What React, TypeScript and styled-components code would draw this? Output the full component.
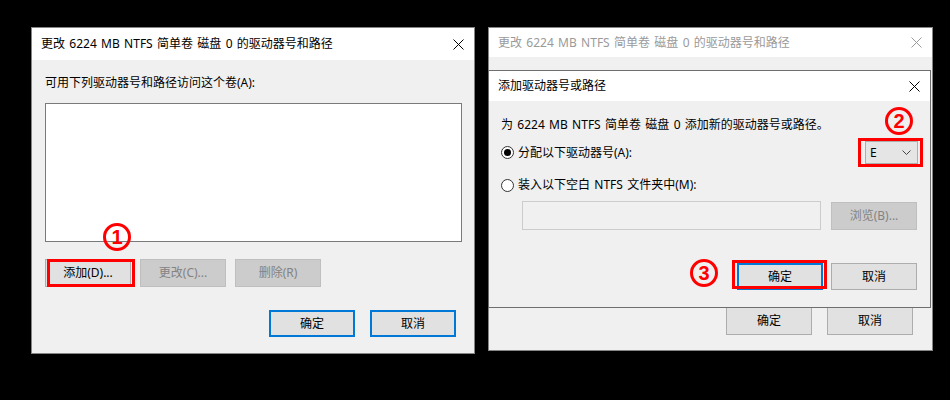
import React from "react";
import styled, { createGlobalStyle } from "styled-components";

const GlobalStyle = createGlobalStyle`
  html, body { margin: 0; padding: 0; background: #000; }
  body {
    font-family: "Noto Sans", "Noto Sans CJK SC", sans-serif;
    font-size: 12px;
    color: #000;
    -webkit-font-smoothing: antialiased;
  }
  * { box-sizing: border-box; }
`;

const Page = styled.div`
  position: relative;
  width: 950px;
  height: 400px;
  background: #000;
  display: flex;
  align-items: flex-start;
  gap: 13px;
  padding: 27px 0 0 31px;
  overflow: hidden;
  word-spacing: 1.2px;
`;

const Window = styled.div<{ $w: number; $h: number }>`
  position: relative;
  display: flex;
  flex-direction: column;
  width: ${(p) => p.$w}px;
  height: ${(p) => p.$h}px;
  border: 1px solid #858585;
  background: #f0f0f0;
`;

const Modal = styled.div`
  position: absolute;
  left: -1px;
  top: 42px;
  width: 443px;
  height: 238px;
  display: flex;
  flex-direction: column;
  border: 1px solid #6e6e6e;
  background: #f0f0f0;
`;

const TitleBar = styled.div<{ $h: number }>`
  height: ${(p) => p.$h}px;
  flex: none;
  background: #fff;
  display: flex;
  align-items: center;
  justify-content: space-between;
  padding: 0 10px 0 9px;
`;

const TitleText = styled.span<{ $inactive?: boolean }>`
  font-size: 12px;
  line-height: 16px;
  color: ${(p) => (p.$inactive ? "#9a9a9a" : "#000")};
  white-space: nowrap;
`;

const CloseIcon = ({ color }: { color: string }) => (
  <svg width="11" height="11" viewBox="0 0 11 11">
    <path d="M0.5 0.5 L10.5 10.5 M10.5 0.5 L0.5 10.5" stroke={color} strokeWidth="1" fill="none" />
  </svg>
);

const Body = styled.div<{ $pad: string }>`
  flex: 1;
  display: flex;
  flex-direction: column;
  padding: ${(p) => p.$pad};
  position: relative;
`;

const Label = styled.div`
  line-height: 16px;
  height: 16px;
  white-space: nowrap;
`;

const ListBox = styled.div`
  margin-top: 12px;
  height: 139px;
  border: 1px solid #7a7a7a;
  background: #fff;
`;

const Row = styled.div<{ $mt?: number; $gap?: number; $justify?: string; $mr?: number }>`
  display: flex;
  align-items: center;
  margin-top: ${(p) => p.$mt ?? 0}px;
  margin-right: ${(p) => p.$mr ?? 0}px;
  gap: ${(p) => p.$gap ?? 0}px;
  justify-content: ${(p) => p.$justify ?? "flex-start"};
`;

const Spacer = styled.div`
  flex: 1;
`;

const Button = styled.div<{ $variant?: "normal" | "default" | "disabled"; $h?: number }>`
  position: relative;
  width: 86px;
  height: ${(p) => p.$h ?? 28}px;
  flex: none;
  display: flex;
  align-items: center;
  justify-content: center;
  font-size: 12px;
  line-height: 16px;
  background: ${(p) => (p.$variant === "disabled" ? "#cccccc" : "#e1e1e1")};
  color: ${(p) => (p.$variant === "disabled" ? "#838383" : "#000")};
  border: ${(p) =>
    p.$variant === "default"
      ? "2px solid #0078d7"
      : p.$variant === "disabled"
      ? "1px solid #bfbfbf"
      : "1px solid #adadad"};
`;

const RedFrame = styled.div<{ $l: number; $t: number; $w: number; $h: number }>`
  position: absolute;
  left: ${(p) => p.$l}px;
  top: ${(p) => p.$t}px;
  width: ${(p) => p.$w}px;
  height: ${(p) => p.$h}px;
  border: 3px solid #ff0000;
  pointer-events: none;
`;

const Badge = styled.div<{ $l: number; $t: number }>`
  position: absolute;
  left: ${(p) => p.$l}px;
  top: ${(p) => p.$t}px;
  width: 28px;
  height: 28px;
  border: 3px solid #ff0000;
  border-radius: 50%;
  display: flex;
  align-items: center;
  justify-content: center;
  color: #ff0000;
  font-family: "Liberation Sans", "Noto Sans", sans-serif;
  font-weight: 700;
  font-size: 20px;
  line-height: 1;
  z-index: 5;
`;

const RadioRow = styled.div`
  display: flex;
  align-items: center;
  gap: 4px;
  line-height: 16px;
  white-space: nowrap;
`;

const RadioCircle = styled.span<{ $checked?: boolean }>`
  width: 13px;
  height: 13px;
  border-radius: 50%;
  border: 1px solid #333;
  background: #fff;
  display: flex;
  align-items: center;
  justify-content: center;
  &::after {
    content: "";
    width: 7px;
    height: 7px;
    border-radius: 50%;
    background: ${(p) => (p.$checked ? "#000" : "transparent")};
  }
`;

const Combo = styled.div`
  position: relative;
  width: 53px;
  height: 23px;
  background: #e5e5e5;
  border: 1px solid #adadad;
  display: flex;
  align-items: center;
  justify-content: space-between;
  padding: 0 6px 0 4px;
  line-height: 16px;
`;

const TextField = styled.div`
  margin-left: 21px;
  width: 299px;
  height: 29px;
  border: 1px solid #cccccc;
  background: #f0f0f0;
`;

const AnnotatedWrap = styled.div`
  position: relative;
  flex: none;
`;

export default function App() {
  return (
    <>
      <GlobalStyle />
      <Page>
        {/* Left dialog */}
        <Window $w={444} $h={327}>
          <TitleBar $h={32}>
            <TitleText>更改 6224 MB NTFS 简单卷 磁盘 0 的驱动器号和路径</TitleText>
            <CloseIcon color="#000" />
          </TitleBar>
          <Body $pad="15px 12px 16px 13px">
            <Label>可用下列驱动器号和路径访问这个卷(A):</Label>
            <ListBox />
            <Row $mt={17} $gap={9}>
              <AnnotatedWrap>
                <Button $variant="normal">添加(D)...</Button>
                <RedFrame $l={2} $t={0} $w={88} $h={28} />
              </AnnotatedWrap>
              <Button $variant="disabled">更改(C)...</Button>
              <Button $variant="disabled">删除(R)</Button>
            </Row>
            <Spacer />
            <Row $gap={15} $justify="flex-end" $mr={6}>
              <Button $variant="default" $h={27}>确定</Button>
              <Button $variant="default" $h={27}>取消</Button>
            </Row>
          </Body>
          <Badge $l={71} $t={195}>1</Badge>
        </Window>

        {/* Right: background window with modal */}
        <Window $w={445} $h={324}>
          <TitleBar $h={29}>
            <TitleText $inactive>更改 6224 MB NTFS 简单卷 磁盘 0 的驱动器号和路径</TitleText>
            <CloseIcon color="#9a9a9a" />
          </TitleBar>
          <Body $pad="0 19px 15px 0">
            <Spacer />
            <Row $gap={15} $justify="flex-end">
              <Button $variant="normal">确定</Button>
              <Button $variant="normal">取消</Button>
            </Row>
          </Body>

          <Modal>
            <TitleBar $h={30}>
              <TitleText>添加驱动器号或路径</TitleText>
              <CloseIcon color="#000" />
            </TitleBar>
            <Body $pad="16px 12px 17px 12px">
              <Label>为 6224 MB NTFS 简单卷 磁盘 0 添加新的驱动器号或路径。</Label>
              <Row $mt={8} $justify="space-between">
                <RadioRow>
                  <RadioCircle $checked />
                  分配以下驱动器号(A):
                </RadioRow>
                <AnnotatedWrap>
                  <Combo>
                    <span>E</span>
                    <svg width="9" height="5" viewBox="0 0 9 5">
                      <path d="M0.5 0.5 L4.5 4.5 L8.5 0.5" stroke="#444" strokeWidth="1" fill="none" />
                    </svg>
                  </Combo>
                  <RedFrame $l={-7} $t={-3} $w={65} $h={29} />
                </AnnotatedWrap>
              </Row>
              <Row $mt={13}>
                <RadioRow>
                  <RadioCircle />
                  装入以下空白 NTFS 文件夹中(M):
                </RadioRow>
              </Row>
              <Row $mt={8} $justify="space-between" $mr={1}>
                <TextField />
                <Button $variant="disabled">浏览(B)...</Button>
              </Row>
              <Spacer />
              <Row $gap={8} $justify="flex-end" $mr={1}>
                <AnnotatedWrap>
                  <Button $variant="default" $h={27}>确定</Button>
                  <RedFrame $l={-5} $t={-3} $w={95} $h={29} />
                </AnnotatedWrap>
                <Button $variant="normal" $h={27}>取消</Button>
              </Row>
              <Badge $l={396} $t={6}>2</Badge>
              <Badge $l={201} $t={158}>3</Badge>
            </Body>
          </Modal>
        </Window>
      </Page>
    </>
  );
}
